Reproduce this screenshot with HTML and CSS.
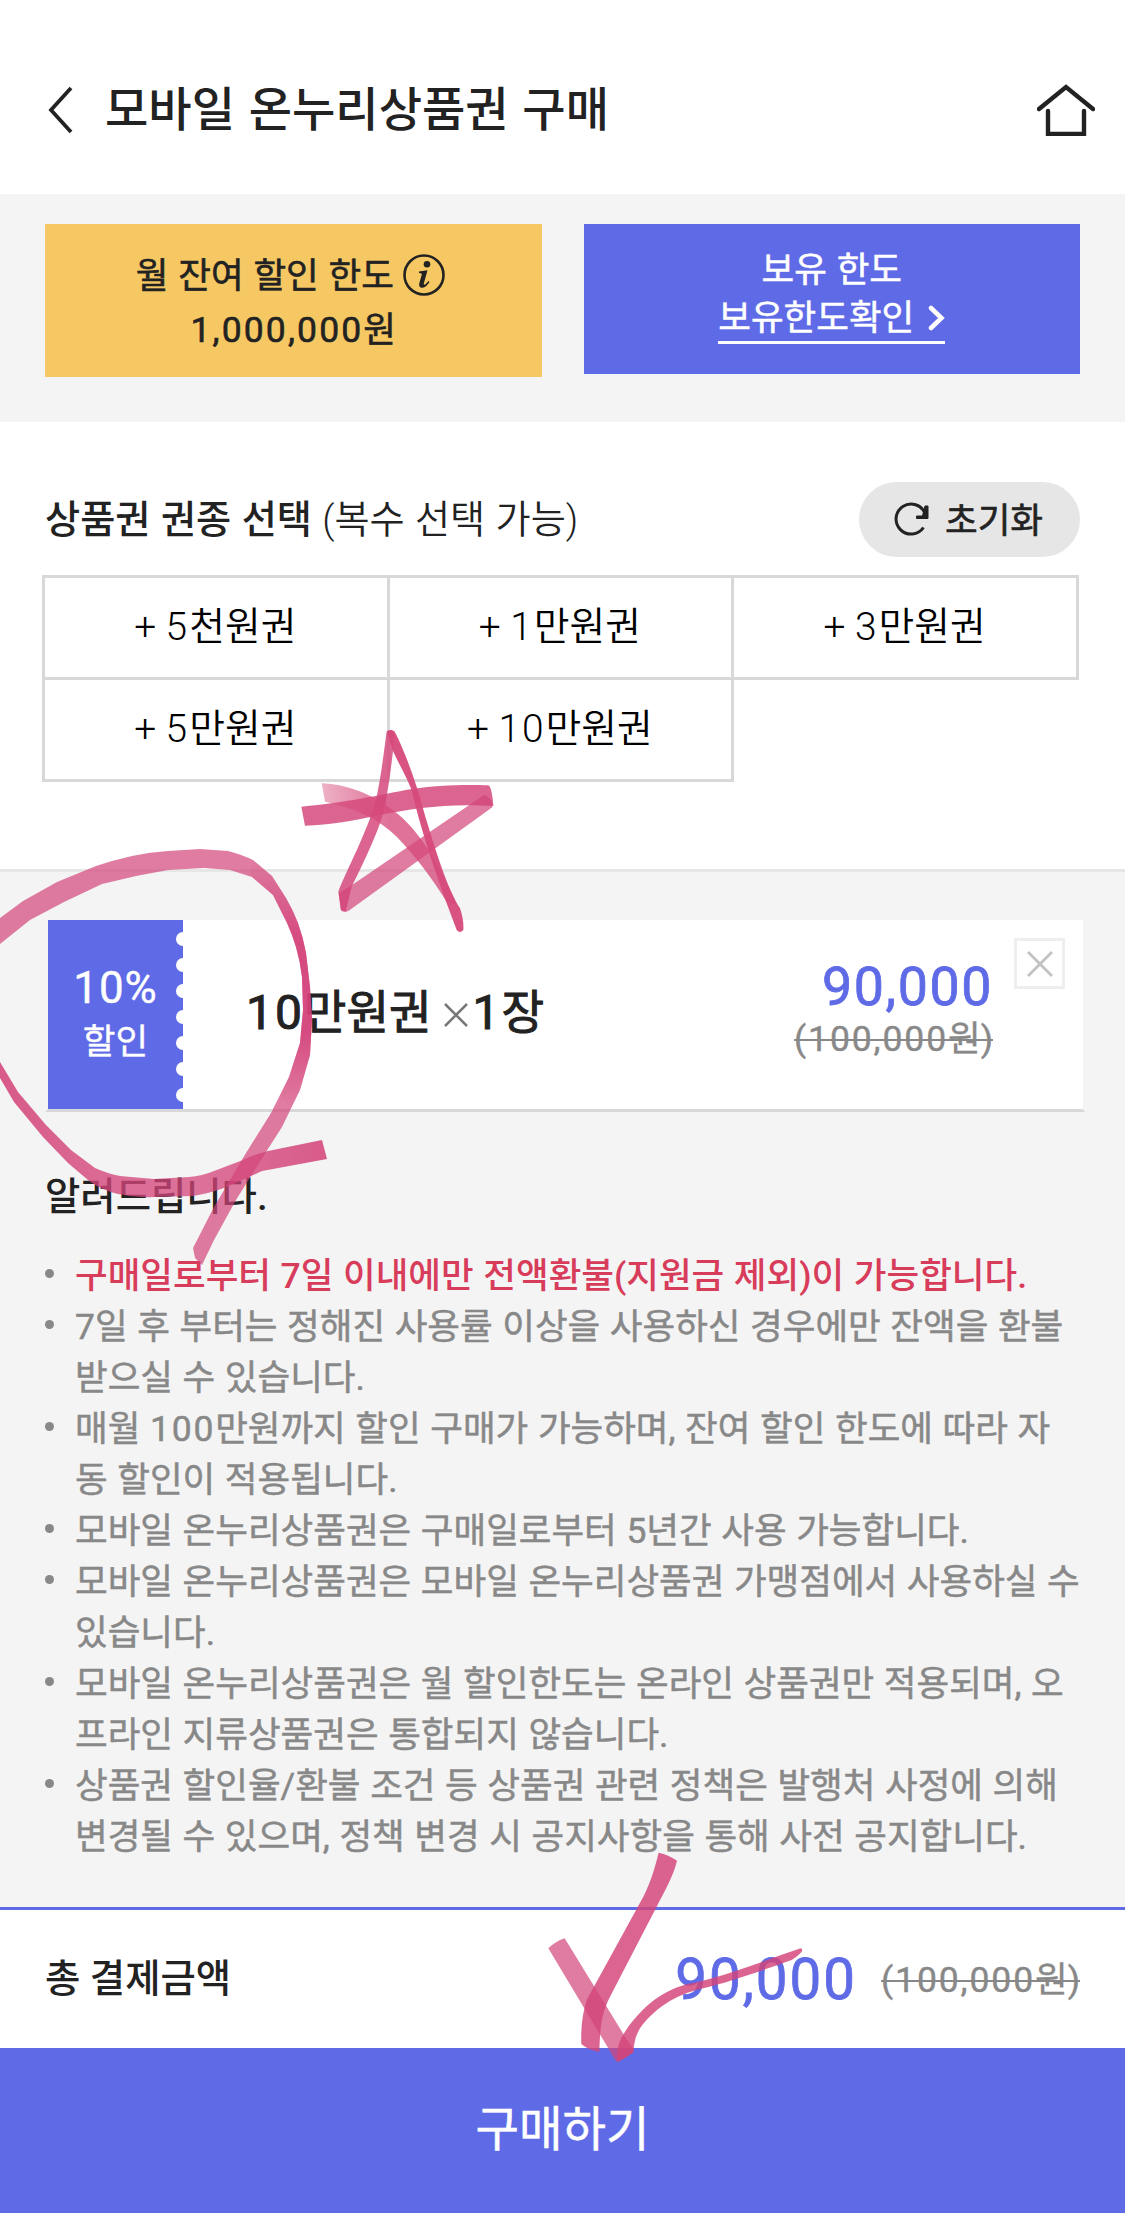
FILE: index.html
```html
<!DOCTYPE html>
<html lang="ko">
<head>
<meta charset="utf-8">
<title>모바일 온누리상품권 구매</title>
<link rel="stylesheet" href="styles.css">
</head>
<body>
<header class="header">
  <svg class="back" width="26" height="48" viewBox="0 0 26 48"><path d="M23 2 3 24 23 46"/></svg>
  <h1 class="title">모바일 온누리상품권 구매</h1>
  <svg class="home" width="58" height="52" viewBox="0 0 58 52"><path d="M2 25 29 3 56 25M11 27V50H47V27"/></svg>
</header>

<section class="limits">
  <div class="limit limit-month">
    <p class="limit-line limit-name">월 잔여 할인 한도
      <svg class="info" width="42" height="42" viewBox="0 0 42 42"><circle cx="21" cy="21" r="19.5"/><circle class="dot" cx="24" cy="10.3" r="3.3"/><path class="dot" d="M16 17.5 24.5 16.2 20.8 29.5Q20.5 31.5 22.5 30.3L25.5 27 26.5 28Q22 34.5 18.3 33.8 15.3 33 16.5 28.5L18.8 20.5Q19.2 18.8 16 18.9Z"/></svg>
    </p>
    <p class="limit-line"><span class="num">1,000,000</span>원</p>
  </div>
  <div class="limit limit-hold">
    <p class="limit-line">보유 한도</p>
    <a class="limit-link">보유한도확인<svg class="chevron" width="17" height="26" viewBox="0 0 17 26"><path d="M3 3 13.5 13 3 23"/></svg></a>
  </div>
</section>

<section class="select">
  <div class="select-head">
    <h2 class="select-title"><b>상품권 권종 선택</b> (복수 선택 가능)</h2>
    <button class="reset"><svg width="36" height="36" viewBox="0 0 36 36"><path d="M31 12.500A15 15 0 1 0 29.500 26.500"/><path class="tip" d="M34 5V17.500H22.500V15H28.500L31 5Z"/></svg>초기화</button>
  </div>
  <div class="options">
    <div class="option">+ <span class="num">5</span>천원권</div>
    <div class="option">+ <span class="num">1</span>만원권</div>
    <div class="option">+ <span class="num">3</span>만원권</div>
    <div class="option">+ <span class="num">5</span>만원권</div>
    <div class="option">+ <span class="num">10</span>만원권</div>
  </div>
</section>

<main class="detail">
  <article class="coupon">
    <div class="rate">
      <span class="rate-num">10%</span>
      <span class="rate-label">할인</span>
      <svg class="notches" width="7" height="189" viewBox="0 0 7 189"><circle cx="7" cy="19" r="7"/><circle cx="7" cy="45" r="7"/><circle cx="7" cy="71" r="7"/><circle cx="7" cy="97" r="7"/><circle cx="7" cy="123" r="7"/><circle cx="7" cy="149" r="7"/><circle cx="7" cy="175" r="7"/></svg>
    </div>
    <div class="name"><span class="num">10</span>만원권<svg class="times" width="24" height="26" viewBox="0 0 24 26"><path d="M1 2 23 24M23 2 1 24"/></svg><span class="num">1</span>장</div>
    <div class="prices">
      <span class="price">90,000</span>
      <s class="origin"><span class="num">(100,000</span>원)</s>
    </div>
    <button class="remove"><svg width="26" height="26" viewBox="0 0 26 26"><path d="M1 1 25 25M25 1 1 25"/></svg></button>
  </article>

  <h3 class="notice-title">알려드립니다.</h3>
  <ul class="notice">
    <li class="warn">구매일로부터 7일 이내에만 전액환불(지원금 제외)이 가능합니다.</li>
    <li>7일 후 부터는 정해진 사용률 이상을 사용하신 경우에만 잔액을 환불<br>받으실 수 있습니다.</li>
    <li>매월 <span class="num">100</span>만원까지 할인 구매가 가능하며, 잔여 할인 한도에 따라 자<br>동 할인이 적용됩니다.</li>
    <li>모바일 온누리상품권은 구매일로부터 5년간 사용 가능합니다.</li>
    <li>모바일 온누리상품권은 모바일 온누리상품권 가맹점에서 사용하실 수<br>있습니다.</li>
    <li>모바일 온누리상품권은 월 할인한도는 온라인 상품권만 적용되며, 오<br>프라인 지류상품권은 통합되지 않습니다.</li>
    <li>상품권 할인율/환불 조건 등 상품권 관련 정책은 발행처 사정에 의해<br>변경될 수 있으며, 정책 변경 시 공지사항을 통해 사전 공지합니다.</li>
  </ul>
</main>

<footer class="total">
  <span class="total-label">총 결제금액</span>
  <span class="total-price">90,000</span>
  <s class="origin"><span class="num">(100,000</span>원)</s>
</footer>
<button class="buy">구매하기</button>

<svg class="marks" width="1125" height="2213" viewBox="0 0 1125 2213">
  <defs>
    <linearGradient id="fade" x1="0" x2=".5"><stop offset="0" stop-color="#d64a7b" stop-opacity=".55"/><stop offset="1" stop-color="#d64a7b"/></linearGradient>
    <linearGradient id="press" x1="0" y1="0" x2="0" y2="1"><stop offset="0" stop-color="#d3407a" stop-opacity="0"/><stop offset=".3" stop-color="#d3407a"/><stop offset=".7" stop-color="#d3407a"/><stop offset="1" stop-color="#d3407a" stop-opacity="0"/></linearGradient>
    <linearGradient id="sweep" x1="0" x2="1"><stop offset="0" stop-color="#d4457a"/><stop offset=".3" stop-color="#d4457a" stop-opacity=".9"/><stop offset=".6" stop-color="#d4457a" stop-opacity=".84"/><stop offset="1" stop-color="#d4457a"/></linearGradient>
  </defs>
  <!-- star -->
  <g transform="translate(280 700) scale(.33333)">
    <path class="mid" d="M64 320C200 308 300 285 390 268 470 255 560 253 625 256Q636 262 640 318C500 310 400 325 300 345 220 362 150 375 75 377Z"/>
    <path class="soft" d="M612 285Q640 295 637 322L205 633Q185 640 182 628L176 580 216 555Z"/>
    <path class="mid" d="M175 575C190 530 270 380 290 290 305 220 312 150 320 95Q330 85 345 95C335 200 325 260 315 320 300 390 235 520 215 560L197 635 183 630Z"/>
    <path class="deep" d="M320 95Q335 82 348 102C380 170 410 250 436 350 470 460 500 560 540 625Q552 660 550 690 540 702 530 690L500 610C460 500 420 380 395 270 375 220 350 180 338 150Z"/>
    <path fill="url(#fade)" opacity=".78" d="M125 250C200 252 280 285 330 325 400 370 470 470 530 615L500 605C460 540 400 460 350 410 300 360 230 325 135 305Z"/>
  </g>
  <!-- circle -->
  <path class="soft" d="M0 918 23 901 57 882 96 866Q114 860 132 856 150 852 168 851L200 849 228 851Q243 855 253 860L272 876 286 898Q293 910 298 923 303 937 306 953L310 987 312 1020 310 1055 300 1090 282 1127 266 1152 236 1200 214 1240 202 1265 195 1258 193 1248 214 1207 246 1153 271 1113 289 1077 300 1043 303 1010 302 977Q300 961 296 947 292 934 287 923L273 895 252 877 230 870 204 868 168 870 136 876 102 884 64 902 30 920 0 944Z"/>
  <path fill="url(#press)" opacity=".8" d="M253 860 272 876 286 898Q293 910 298 923 303 937 306 953L310 987 312 1020 310 1055 300 1090 291 1108 280 1096 289 1077 300 1043 303 1010 302 977Q300 961 296 947 292 934 287 923L273 895 250 875Z"/>
  <path fill="url(#sweep)" opacity=".88" d="M0 1078 14 1102 43 1137 68 1163 88 1180Q101 1190 118 1194 136 1198 154 1197L193 1196Q212 1193 229 1186L262 1171 327 1159 322 1140 268 1151Q255 1154 243 1160L214 1171Q202 1176 189 1177L154 1179 120 1176Q106 1173 95 1168L71 1150 46 1125 18 1092 0 1062Z"/>
  <!-- check -->
  <g transform="translate(530 1840) scale(.33333)">
    <path class="mid" d="M386 38Q415 44 441 62C430 110 400 160 380 200L240 470C215 520 210 560 208 636Q175 630 154 612C152 560 158 520 170 480L340 170C365 120 375 80 386 38Z"/>
    <path class="soft" d="M55 325Q75 305 104 295L285 590 312 630Q300 650 262 667Q250 655 235 625Z"/>
    <path class="mid" d="M262 665Q255 620 285 575C350 480 420 440 500 427 620 398 720 355 812 325Q830 330 785 360C700 390 600 425 520 445 430 465 370 510 330 565 312 595 312 620 310 638Z"/>
  </g>
</svg>
</body>
</html>
```
FILE: styles.css
```css
* { box-sizing: border-box; margin: 0; padding: 0; }
body {
  position: relative;
  width: 1125px;
  height: 2213px;
  background: #fff;
  color: #222;
  font-family: Roboto, "Noto Sans CJK KR", sans-serif;
  font-size: 35.5px;
}
button { border: 0; font: inherit; color: inherit; }
svg { fill: none; stroke: #222; }
.num { letter-spacing: .05em; }

.header { display: flex; align-items: center; height: 194px; padding: 26px 30px 0 48px; }
.back { stroke-width: 3.8; }
.title { margin-left: 31px; font-size: 47.1px; font-weight: 500; word-spacing: 2px; line-height: 60px; }
.home { margin-left: auto; stroke-width: 4.4; stroke-linecap: round; }

.limits { display: flex; align-items: flex-start; gap: 42px; height: 228px; padding: 30px 45px 0; background: #f4f4f4; }
.limit { flex: 1; text-align: center; word-spacing: 1px; }
.limit-month { height: 153px; padding-top: 25px; background: #f6c863; -webkit-text-stroke: .6px #222; }
.limit-month .limit-line { line-height: 54px; }
.limit-month .num { letter-spacing: .06em; }
.limit-name { padding-right: 6px; }
.limit-hold { height: 150px; padding-top: 22px; background: #5f6be6; color: #fff; -webkit-text-stroke: .5px #fff; }
.limit-hold .limit-line { line-height: 48px; }
.info { margin-left: -1px; vertical-align: -8px; stroke-width: 2.6; }
.info .dot { fill: #222; stroke: none; }
.limit-link { display: inline-block; height: 50px; line-height: 48px; border-bottom: 3px solid #fff; }
.chevron { margin-left: 14px; vertical-align: -1px; stroke: #fff; stroke-width: 4.5; stroke-linecap: round; }

.select { height: 450px; padding: 60px 45px 0 42px; border-bottom: 3px solid #e6e6e6; }
.select-head { display: flex; align-items: center; justify-content: space-between; height: 75px; }
.select-title { margin: 0 0 0 3px; font-size: 38.2px; font-weight: 350; word-spacing: 1px; line-height: 54px; }
.select-title b { font-weight: 500; }
.reset { display: flex; align-items: center; gap: 15px; width: 221px; height: 75px; padding: 0 0 4px 35px; border-radius: 38px; background: #e6e6e6; -webkit-text-stroke: .6px #222; }
.reset svg { margin-top: 2px; stroke-width: 3; }
.reset .tip { fill: #222; stroke-width: 1; }
.options { display: grid; grid-template-columns: repeat(3, 344.67px); grid-auto-rows: 102px; margin-top: 18px; padding-bottom: 3px; color: #000; font-size: 38.9px; }
.option { width: 347.67px; height: 105px; padding-right: 1px; border: 3px solid #d8d8d8; line-height: 97px; text-align: center; font-weight: 350; }

.detail { height: 1035px; padding: 48px 40px 0 45px; background: #f4f4f4; }
.coupon { position: relative; display: flex; width: 1040px; height: 192px; border: 0 solid transparent; border-width: 0 2px 3px 3px; border-bottom-color: #d8d8d8; background: #fff; background-clip: padding-box; }
.rate { position: relative; display: flex; flex-direction: column; align-items: center; width: 135px; padding-top: 42px; background: #5f6be6; color: #fff; -webkit-text-stroke: .4px #fff; }
.rate-num { font-size: 44px; line-height: 53px; letter-spacing: .02em; }
.rate-label { font-size: 35.5px; line-height: 54px; }
.notches { position: absolute; top: 0; right: 0; fill: #fff; stroke: none; }
.name { margin-left: 63px; font-size: 46.3px; font-weight: 400; line-height: 185px; white-space: nowrap; -webkit-text-stroke: 1px #222; }
.name .num { font-size: 48px; letter-spacing: .04em; }
.name svg { margin: 0 5px 0 12px; stroke: #777; stroke-width: 2.5; vertical-align: 1px; }
.prices { display: flex; flex-direction: column; align-items: flex-end; flex: 1; padding: 37px 90px 0 0; }
.price, .total-price { color: #5f6be6; letter-spacing: .03em; -webkit-text-stroke: .8px #5f6be6; }
.price { font-size: 53.7px; line-height: 60px; }
.origin { color: #888; line-height: 48px; text-decoration-thickness: 2px; -webkit-text-stroke: .4px #888; }
.prices .origin { margin-top: -2px; }
.origin .num { letter-spacing: .053em; }
.remove { position: absolute; top: 18px; right: 18px; display: grid; place-items: center; width: 51px; height: 51px; border: 3px solid #eee; background: #fff; }
.remove svg { stroke: #c2c2c2; stroke-width: 2.8; }

.notice-title { margin-top: 57px; font-size: 38.4px; font-weight: 500; line-height: 56px; }
.notice { margin-top: 26px; list-style: none; color: #888; line-height: 51px; word-spacing: .8px; -webkit-text-stroke: .5px #888; }
.notice li { position: relative; padding-left: 30px; white-space: nowrap; }
.notice li::before { content: ""; position: absolute; left: 0; top: 18px; width: 9px; height: 9px; border-radius: 50%; background: #888; }
.notice .warn { color: #d83c5b; font-weight: 500; -webkit-text-stroke: 0; }

.total { display: flex; align-items: center; height: 141px; padding: 2px 45px 0; border-top: 3px solid #5f6be6; }
.total-label { flex: 1; margin-bottom: 2px; font-size: 38.4px; font-weight: 500; line-height: 56px; }
.total-price { margin-right: 24px; font-size: 56.5px; letter-spacing: .035em; line-height: 64px; }
.buy { display: block; width: 100%; height: 165px; padding-bottom: 10px; background: #5f6be6; color: #fff; font-size: 47.3px; -webkit-text-stroke: .5px #fff; }

.marks { position: absolute; top: 0; left: 0; stroke: none; pointer-events: none; }
.soft { fill: #d34579; opacity: .7; }
.mid { fill: #d4457a; opacity: .83; }
.deep { fill: #d64a7b; opacity: .95; }
```
